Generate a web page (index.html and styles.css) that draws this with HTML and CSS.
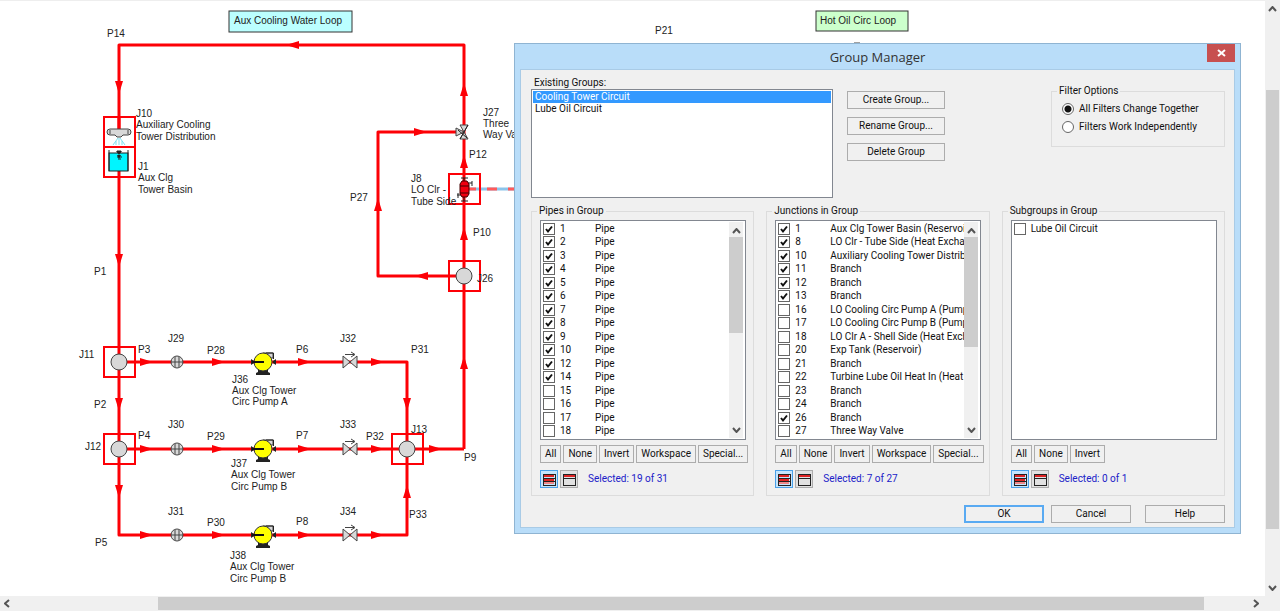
FILE: index.html
```
<!DOCTYPE html>
<html lang="en">
<head>
<meta charset="utf-8">
<title>Group Manager</title>
<link rel="stylesheet" href="styles.css">
</head>
<body>
<main class="workspace">
  <section class="canvas">
    <svg class="diagram" width="1265" height="596" viewBox="0 0 1265 596" role="img" aria-label="Piping diagram">
      <defs>
        <path id="right" class="arrow" d="M-6-4 7 0-6 4Z"/>
        <g id="left"><use href="#right" transform="rotate(180)"/></g>
        <g id="up"><use href="#right" transform="rotate(-90)"/></g>
        <g id="down"><use href="#right" transform="rotate(90)"/></g>
        <rect id="box" class="box" x="-15" y="-15" width="31" height="30"/>
        <circle id="branch" class="part" r="8"/>
        <g id="screen">
          <circle class="part" r="6"/>
          <path class="thin" d="M-2-5V5M2-5V5M-6 0H6"/>
        </g>
        <g id="pump">
          <path class="dark" d="M-5 7H5V10L7 11V13H-7V11L-5 10Z"/>
          <path class="part" d="M0-9H10V-4H7"/>
          <path class="outline" d="M3-9H10.500V-3"/>
          <circle class="yellow" r="9"/>
          <path class="dark" d="M-12-3-9-1V1L-12 3ZM13-3 10-1V1L13 3Z"/>
          <path class="shaft" d="M-11 0H1"/>
        </g>
        <g id="valve">
          <path class="part" d="M-7-6V6L7-6V6Z"/>
          <path class="thin" d="M-5-7.500H4M1-10 5-7.500 1-5"/>
        </g>
        <g id="rows-all">
          <path class="red" d="M2 3H12M2 7H12"/>
          <path class="pink" d="M2 10H12"/>
          <path class="frame" d="M1 1H13V12H1ZM1 5H13M1 8H13"/>
        </g>
        <g id="rows-some">
          <path class="red" d="M1 3H13"/>
          <path class="frame" d="M1 1H13V12H1ZM1 5H13"/>
        </g>
      </defs>

      <g class="pipe">
        <path d="M464 449V45H119V535H407V449"/>
        <path d="M119 362H407V449"/>
        <path d="M119 449H464"/>
        <path d="M464 276H378V132H456"/>
      </g>
      <path class="link-blue" d="M470 189H530"/>
      <path class="link-red" d="M466 189H530"/>

      <use href="#left" x="293" y="45"/>
      <use href="#down" x="119" y="87"/>
      <use href="#down" x="119" y="260"/>
      <use href="#down" x="119" y="404"/>
      <use href="#down" x="119" y="491"/>
      <use href="#right" x="146" y="362"/>
      <use href="#right" x="218" y="362"/>
      <use href="#right" x="304" y="362"/>
      <use href="#right" x="377" y="362"/>
      <use href="#right" x="146" y="449"/>
      <use href="#right" x="218" y="449"/>
      <use href="#right" x="304" y="449"/>
      <use href="#right" x="377" y="449"/>
      <use href="#right" x="435" y="449"/>
      <use href="#right" x="146" y="535"/>
      <use href="#right" x="218" y="535"/>
      <use href="#right" x="304" y="535"/>
      <use href="#right" x="377" y="535"/>
      <use href="#down" x="407" y="404"/>
      <use href="#up" x="407" y="492"/>
      <use href="#up" x="464" y="363"/>
      <use href="#up" x="464" y="234"/>
      <use href="#up" x="464" y="162"/>
      <use href="#up" x="464" y="90"/>
      <use href="#left" x="422" y="276"/>
      <use href="#up" x="378" y="205"/>
      <use href="#right" x="420" y="132"/>

      <rect class="gap" x="106" y="129" width="26" height="23"/>
      <path class="pipe-end" d="M119 116V129"/>
      <path class="part" d="M110 129H128Q131 129 131 132T128 135H123L121 137H117L115 135H110Q107 135 107 132T110 129Z"/>
      <path class="thin" d="M110 130V134M128 130V134"/>
      <path class="spray" d="M118 138 113 145M119 138V145M120 138 125 145M116 141V145M122 141V145"/>
      <rect class="cyan" x="109" y="153" width="19" height="18"/>
      <path class="outline" d="M109 150V171M128 150V171M117 151H121M117 157H122M118 159H121"/>
      <path class="dark" d="M116 151H122L119 155ZM117 155H121L119 159Z"/>

      <use href="#box" x="119" y="132"/>
      <use href="#box" x="119" y="162"/>
      <use href="#box" x="119" y="362"/>
      <use href="#box" x="119" y="449"/>
      <use href="#box" x="407" y="449"/>
      <use href="#box" x="464" y="276"/>
      <use href="#box" x="464" y="189"/>
      <use href="#branch" x="119" y="362"/>
      <use href="#branch" x="119" y="449"/>
      <use href="#branch" x="407" y="449"/>
      <use href="#branch" x="464" y="276"/>

      <use href="#screen" x="177" y="362"/>
      <use href="#screen" x="177" y="449"/>
      <use href="#screen" x="177" y="535"/>
      <use href="#pump" x="263" y="362"/>
      <use href="#pump" x="263" y="449"/>
      <use href="#pump" x="263" y="535"/>
      <use href="#valve" x="350" y="362"/>
      <use href="#valve" x="350" y="449"/>
      <use href="#valve" x="350" y="535"/>

      <path class="part" d="M460 125H468L460 139H468ZM456 128V136L464 132Z"/>
      <path class="outline" d="M460 139 468 125M458 130 467 138"/>

      <path class="outline" d="M461 178H468M464 178V182M467 183H472M472 181V186M461 201H468M464 197V201M457 195H462M458 193V198"/>
      <path class="cooler" d="M462 181H467L469 184V194L467 197H462L460 194V184ZM460 186H469M460 193H469"/>

      <rect class="tag tag-blue" x="229" y="11" width="123" height="21"/>
      <rect class="tag tag-green" x="816" y="11" width="92" height="20"/>
      <path class="thin" d="M854 43H860"/>

      <g class="labels">
        <text x="234" y="24">Aux Cooling Water Loop</text>
        <text x="820" y="24">Hot Oil Circ Loop</text>
        <text x="107" y="37">P14</text>
        <text x="655" y="34">P21</text>
        <text x="136" y="117">J10</text>
        <text x="136" y="128">Auxiliary Cooling</text>
        <text x="136" y="140">Tower Distribution</text>
        <text x="138" y="170">J1</text>
        <text x="138" y="181">Aux Clg</text>
        <text x="138" y="193">Tower Basin</text>
        <text x="94" y="275">P1</text>
        <text x="94" y="408">P2</text>
        <text x="95" y="546">P5</text>
        <text x="79" y="358">J11</text>
        <text x="85" y="450">J12</text>
        <text x="138" y="353">P3</text>
        <text x="138" y="439">P4</text>
        <text x="168" y="342">J29</text>
        <text x="168" y="428">J30</text>
        <text x="168" y="515">J31</text>
        <text x="207" y="354">P28</text>
        <text x="207" y="440">P29</text>
        <text x="207" y="526">P30</text>
        <text x="232" y="383">J36</text>
        <text x="232" y="394">Aux Clg Tower</text>
        <text x="232" y="405">Circ Pump A</text>
        <text x="231" y="467">J37</text>
        <text x="231" y="478">Aux Clg Tower</text>
        <text x="231" y="490">Circ Pump B</text>
        <text x="230" y="559">J38</text>
        <text x="230" y="570">Aux Clg Tower</text>
        <text x="230" y="582">Circ Pump B</text>
        <text x="296" y="353">P6</text>
        <text x="296" y="439">P7</text>
        <text x="296" y="525">P8</text>
        <text x="340" y="342">J32</text>
        <text x="340" y="428">J33</text>
        <text x="340" y="515">J34</text>
        <text x="411" y="353">P31</text>
        <text x="366" y="440">P32</text>
        <text x="409" y="518">P33</text>
        <text x="411" y="433">J13</text>
        <text x="464" y="461">P9</text>
        <text x="477" y="282">J26</text>
        <text x="473" y="236">P10</text>
        <text x="469" y="158">P12</text>
        <text x="350" y="201">P27</text>
        <text x="411" y="182">J8</text>
        <text x="411" y="193">LO Clr -</text>
        <text x="411" y="205">Tube Side</text>
        <text x="483" y="116">J27</text>
        <text x="483" y="127">Three</text>
        <text x="483" y="138">Way Valve</text>
      </g>
    </svg>

    <section class="dialog" role="dialog" aria-labelledby="dialog-title">
      <header class="titlebar">
        <h1 id="dialog-title" class="title">Group Manager</h1>
        <button class="close" type="button" aria-label="Close"><svg width="9" height="8" viewBox="0 0 9 8"><path d="M1 1 8 7M8 1 1 7"/></svg></button>
      </header>
      <form class="body">
        <div class="top">
          <div class="existing">
            <label for="groups">Existing Groups:</label>
            <select id="groups" class="groups" size="8">
              <option class="chosen">Cooling Tower Circuit</option>
              <option>Lube Oil Circuit</option>
            </select>
          </div>
          <div class="actions">
            <button class="btn" type="button">Create Group...</button>
            <button class="btn" type="button">Rename Group...</button>
            <button class="btn" type="button">Delete Group</button>
          </div>
          <fieldset class="panel filter">
            <legend>Filter Options</legend>
            <label class="radio"><input type="radio" name="filter" checked>All Filters Change Together</label>
            <label class="radio"><input type="radio" name="filter">Filters Work Independently</label>
          </fieldset>
        </div>

        <div class="panels">
          <fieldset class="panel">
            <legend>Pipes in Group</legend>
            <div class="list">
              <div class="rows">
                <label class="row"><input type="checkbox" checked><span>1</span><span>Pipe</span></label>
                <label class="row"><input type="checkbox" checked><span>2</span><span>Pipe</span></label>
                <label class="row"><input type="checkbox" checked><span>3</span><span>Pipe</span></label>
                <label class="row"><input type="checkbox" checked><span>4</span><span>Pipe</span></label>
                <label class="row"><input type="checkbox" checked><span>5</span><span>Pipe</span></label>
                <label class="row"><input type="checkbox" checked><span>6</span><span>Pipe</span></label>
                <label class="row"><input type="checkbox" checked><span>7</span><span>Pipe</span></label>
                <label class="row"><input type="checkbox" checked><span>8</span><span>Pipe</span></label>
                <label class="row"><input type="checkbox" checked><span>9</span><span>Pipe</span></label>
                <label class="row"><input type="checkbox" checked><span>10</span><span>Pipe</span></label>
                <label class="row"><input type="checkbox" checked><span>12</span><span>Pipe</span></label>
                <label class="row"><input type="checkbox" checked><span>14</span><span>Pipe</span></label>
                <label class="row"><input type="checkbox"><span>15</span><span>Pipe</span></label>
                <label class="row"><input type="checkbox"><span>16</span><span>Pipe</span></label>
                <label class="row"><input type="checkbox"><span>17</span><span>Pipe</span></label>
                <label class="row"><input type="checkbox"><span>18</span><span>Pipe</span></label>
              </div>
              <div class="bar bar-pipes">
                <svg width="9" height="6" viewBox="0 0 9 6"><path d="M1 5 4.500 1 8 5"/></svg>
                <div class="thumb"></div>
                <svg width="9" height="6" viewBox="0 0 9 6"><path d="M1 1 4.500 5 8 1"/></svg>
              </div>
            </div>
            <div class="tools">
              <button class="btn" type="button">All</button>
              <button class="btn" type="button">None</button>
              <button class="btn" type="button">Invert</button>
              <button class="btn" type="button">Workspace</button>
              <button class="btn" type="button">Special...</button>
            </div>
            <div class="status">
              <button class="view view-on" type="button" aria-label="Show all"><svg width="14" height="13"><use href="#rows-all"/></svg></button>
              <button class="view" type="button" aria-label="Show selected"><svg width="14" height="13"><use href="#rows-some"/></svg></button>
              <output class="count">Selected: 19 of 31</output>
            </div>
          </fieldset>

          <fieldset class="panel">
            <legend>Junctions in Group</legend>
            <div class="list">
              <div class="rows">
                <label class="row"><input type="checkbox" checked><span>1</span><span>Aux Clg Tower Basin (Reservoir)</span></label>
                <label class="row"><input type="checkbox" checked><span>8</span><span>LO Clr - Tube Side (Heat Exchanger)</span></label>
                <label class="row"><input type="checkbox" checked><span>10</span><span>Auxiliary Cooling Tower Distribution</span></label>
                <label class="row"><input type="checkbox" checked><span>11</span><span>Branch</span></label>
                <label class="row"><input type="checkbox" checked><span>12</span><span>Branch</span></label>
                <label class="row"><input type="checkbox" checked><span>13</span><span>Branch</span></label>
                <label class="row"><input type="checkbox"><span>16</span><span>LO Cooling Circ Pump A (Pump)</span></label>
                <label class="row"><input type="checkbox"><span>17</span><span>LO Cooling Circ Pump B (Pump)</span></label>
                <label class="row"><input type="checkbox"><span>18</span><span>LO Clr A - Shell Side (Heat Exchanger)</span></label>
                <label class="row"><input type="checkbox"><span>20</span><span>Exp Tank (Reservoir)</span></label>
                <label class="row"><input type="checkbox"><span>21</span><span>Branch</span></label>
                <label class="row"><input type="checkbox"><span>22</span><span>Turbine Lube Oil Heat In (Heat</span></label>
                <label class="row"><input type="checkbox"><span>23</span><span>Branch</span></label>
                <label class="row"><input type="checkbox"><span>24</span><span>Branch</span></label>
                <label class="row"><input type="checkbox" checked><span>26</span><span>Branch</span></label>
                <label class="row"><input type="checkbox"><span>27</span><span>Three Way Valve</span></label>
              </div>
              <div class="bar bar-junctions">
                <svg width="9" height="6" viewBox="0 0 9 6"><path d="M1 5 4.500 1 8 5"/></svg>
                <div class="thumb"></div>
                <svg width="9" height="6" viewBox="0 0 9 6"><path d="M1 1 4.500 5 8 1"/></svg>
              </div>
            </div>
            <div class="tools">
              <button class="btn" type="button">All</button>
              <button class="btn" type="button">None</button>
              <button class="btn" type="button">Invert</button>
              <button class="btn" type="button">Workspace</button>
              <button class="btn" type="button">Special...</button>
            </div>
            <div class="status">
              <button class="view view-on" type="button" aria-label="Show all"><svg width="14" height="13"><use href="#rows-all"/></svg></button>
              <button class="view" type="button" aria-label="Show selected"><svg width="14" height="13"><use href="#rows-some"/></svg></button>
              <output class="count">Selected: 7 of 27</output>
            </div>
          </fieldset>

          <fieldset class="panel">
            <legend>Subgroups in Group</legend>
            <div class="list">
              <div class="rows">
                <label class="row row-wide"><input type="checkbox"><span>Lube Oil Circuit</span></label>
              </div>
            </div>
            <div class="tools">
              <button class="btn" type="button">All</button>
              <button class="btn" type="button">None</button>
              <button class="btn" type="button">Invert</button>
            </div>
            <div class="status">
              <button class="view view-on" type="button" aria-label="Show all"><svg width="14" height="13"><use href="#rows-all"/></svg></button>
              <button class="view" type="button" aria-label="Show selected"><svg width="14" height="13"><use href="#rows-some"/></svg></button>
              <output class="count">Selected: 0 of 1</output>
            </div>
          </fieldset>
        </div>

        <footer class="footer">
          <button class="btn btn-default" type="button">OK</button>
          <button class="btn" type="button">Cancel</button>
          <button class="btn btn-help" type="button">Help</button>
        </footer>
      </form>
    </section>
  </section>

  <div class="vscroll">
    <svg width="9" height="6" viewBox="0 0 9 6"><path d="M1 5 4.500 1 8 5"/></svg>
    <div class="vthumb"></div>
    <svg width="9" height="6" viewBox="0 0 9 6"><path d="M1 1 4.500 5 8 1"/></svg>
  </div>
  <div class="hscroll">
    <svg width="6" height="9" viewBox="0 0 6 9"><path d="M5 1 1 4.500 5 8"/></svg>
    <div class="hthumb"></div>
    <svg width="6" height="9" viewBox="0 0 6 9"><path d="M1 1 5 4.500 1 8"/></svg>
  </div>
</main>
</body>
</html>
```
FILE: styles.css
```
* { box-sizing: border-box; }

:root {
  --ui: Roboto, "Liberation Sans", sans-serif;
  --diagram: "Liberation Sans", Arial, sans-serif;
}

body { margin: 0; font: 10px/12px var(--ui); color: #111; }

.workspace {
  display: grid;
  grid-template: 1fr 15px / 1fr 15px;
  height: 100vh;
  background: #f0f0f0;
}

/* Drawing area */
.canvas {
  position: relative;
  overflow: hidden;
  background: #fff;
  border-top: 1px solid #eee;
}
.diagram { position: absolute; top: -1px; left: 0; }
.pipe path, .pipe-end { fill: none; stroke: #fd0006; stroke-width: 3; stroke-linejoin: round; }
.gap { fill: #fff; }
.arrow { fill: #fd0006; }
.box { fill: none; stroke: #fd0006; stroke-width: 2; }
.part { fill: #d8d8d8; stroke: #444; stroke-width: 1; }
.thin { fill: none; stroke: #444; stroke-width: 1; }
.outline { fill: none; stroke: #222; stroke-width: 1; }
.dark { fill: #222; }
.shaft { fill: none; stroke: #111; stroke-width: 2; }
.yellow { fill: #ff0; stroke: #333; stroke-width: 1; }
.cyan { fill: #00f5ff; stroke: #222; stroke-width: 1; }
.cooler { fill: #f00010; stroke: #400; stroke-width: 1; }
.spray { fill: none; stroke: #7fe0ee; stroke-width: 1; }
.link-blue { stroke: #8cc4ea; stroke-width: 3; }
.link-red { stroke: #ff5a5a; stroke-width: 3; stroke-dasharray: 10 11; }
.tag { stroke: #333; stroke-width: 1; }
.tag-blue { fill: #bff; }
.tag-green { fill: #cfc; }
.labels { font: 10px var(--diagram); fill: #222; }

/* Dialog window */
.dialog {
  position: absolute;
  left: 514px;
  top: 42px;
  width: 727px;
  display: flex;
  flex-direction: column;
  padding: 0 5px 5px;
  background: #b9ddf9;
  border: 1px solid #8fb4d2;
}
.titlebar {
  display: grid;
  grid-template-columns: 28px 1fr 28px;
  height: 25px;
}
.title {
  grid-column: 2;
  margin: 0;
  font: 13px/27px "Open Sans", "Noto Sans", sans-serif;
  text-align: center;
  color: #333;
}
.close {
  display: grid;
  place-items: center;
  height: 18px;
  padding: 0;
  border: 0;
  background: #c75050;
}
.close path { fill: none; stroke: #fff; stroke-width: 2; }

.body {
  display: flex;
  flex-direction: column;
  padding: 7px 9px 4px 10px;
  background: #f0f0f0;
  border: 1px solid #a9cbe6;
}
.top { display: flex; align-items: flex-start; height: 128px; }
.existing { display: flex; flex-direction: column; width: 302px; }
.existing label { padding-left: 3px; }
.groups {
  height: 109px;
  padding: 1px;
  overflow: hidden;
  font: 10px/12px var(--ui);
  color: #111;
  background: #fff;
  border: 1px solid #828790;
  border-radius: 0;
  outline: 0;
}
.groups option { height: 12px; min-height: 12px; padding: 0 2px; }
.groups .chosen { color: #fff; background: #39f; }

.actions {
  display: flex;
  flex-direction: column;
  gap: 8px;
  width: 98px;
  margin: 14px 0 0 14px;
}
.btn {
  height: 18px;
  padding: 0 5px;
  font: 10px/14px var(--ui);
  color: #111;
  background: #f0f0f0;
  border: 1px solid #acacac;
  border-radius: 0;
  white-space: nowrap;
}
.btn-default { border: 2px solid #59aaf2; }

.panel {
  min-width: 0;
  margin: 0;
  padding: 3px 8px 7px;
  border: 1px solid #dcdcdc;
}
.panel legend { padding: 0 2px; margin-left: -3px; line-height: 12px; }
.filter {
  display: flex;
  flex-direction: column;
  width: 174px;
  height: 62px;
  margin: 8px 0 0 auto;
}
.radio { display: flex; align-items: center; gap: 5px; height: 18px; padding-left: 2px; white-space: nowrap; }
.radio input {
  appearance: none;
  width: 12px;
  height: 12px;
  margin: 0;
  border: 1px solid #666;
  border-radius: 50%;
  background: #fff;
}
.radio input:checked { background: radial-gradient(#111 3px, #fff 4px); }

.panels {
  display: grid;
  grid-template-columns: 1fr 1fr 1fr;
  gap: 12px;
}
.list {
  display: flex;
  height: 220px;
  width: 206px;
  padding: 1px 2px;
  background: #fff;
  border: 1px solid #828790;
}
.rows {
  flex: 1;
  min-width: 0;
  display: grid;
  grid-template-rows: repeat(16, 1fr);
  overflow: hidden;
}
.row {
  display: grid;
  grid-template-columns: 17px 35px 1fr;
  align-items: center;
  min-height: 0;
  overflow: hidden;
  white-space: nowrap;
}
.row-wide { grid-template-columns: 17px 1fr; }
.row input {
  appearance: none;
  width: 12px;
  height: 12px;
  margin: 0;
  border: 1px solid #666;
  background: #fff;
}
.row input:checked {
  background: url("data:image/svg+xml,%3Csvg xmlns='http://www.w3.org/2000/svg' viewBox='0 0 10 10'%3E%3Cpath d='M2 5 4 7.500 8 2.500' fill='none' stroke='%23111' stroke-width='2'/%3E%3C/svg%3E") #fff;
}
.bar {
  display: flex;
  flex-direction: column;
  align-items: center;
  width: 14px;
  padding: 6px 0 5px;
  background: #f0f0f0;
}
.thumb { width: 100%; margin: 3px 0 auto; background: #cdcdcd; }
.bar-pipes .thumb { height: 96px; }
.bar-junctions .thumb { height: 110px; }
.bar path, .vscroll path, .hscroll path { fill: none; stroke: #555; stroke-width: 2; }

.tools { display: flex; gap: 2px; margin-top: 5px; }
.tools .btn { padding: 0 4px; }
.status { display: flex; align-items: center; gap: 2px; margin-top: 7px; }
.view {
  display: grid;
  place-items: center;
  width: 18px;
  height: 18px;
  padding: 0;
  background: #e1e1e1;
  border: 1px solid #acacac;
}
.view-on { background: #c4e4fc; border-color: #4aa0e8; }
.frame, .red, .pink { fill: none; shape-rendering: crispEdges; }
.frame { stroke: #222; stroke-width: 1; }
.red { stroke: #d22; stroke-width: 2; }
.pink { stroke: #e88; stroke-width: 2; }
.count { margin-left: 8px; color: #2020c8; }

.footer { display: flex; justify-content: flex-end; gap: 7px; margin-top: 9px; }
.footer .btn { width: 80px; }
.footer .btn-help { margin-left: 7px; }

/* Window scroll bars */
.vscroll {
  display: flex;
  flex-direction: column;
  align-items: center;
  padding: 6px 0 5px;
}
.vthumb { flex: 0 0 75%; width: 13px; margin: 78px 0 auto; background: #cdcdcd; }
.hscroll { display: flex; align-items: center; padding: 0 6px 0 4px; }
.hthumb { flex: 0 0 calc(83% + 4px); height: 13px; margin: 0 auto 0 148px; background: #cdcdcd; }
```
